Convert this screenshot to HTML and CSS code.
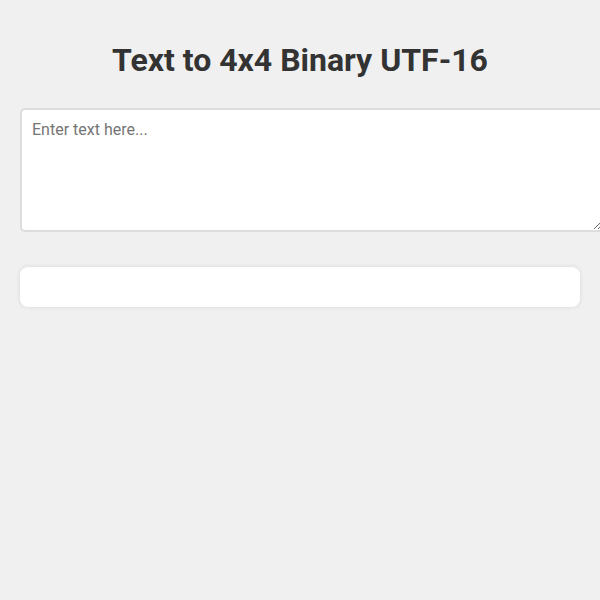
FILE: index.html
```html
<!DOCTYPE html>
<html>
<head>
<meta charset="utf-8">
<link rel="stylesheet" href="styles.css">
</head>
<body>
<div class="container">
  <h1 class="title">Text to 4x4 Binary UTF-16</h1>
  <textarea class="input" placeholder="Enter text here..."></textarea>
  <div class="output"></div>
</div>
</body>
</html>
```
FILE: styles.css
```css
html, body {
  margin: 0;
  background: #f0f0f0;
}
body {
  padding: 20px;
  font-family: Roboto, "Liberation Sans", sans-serif;
  color: #333;
}
.container {
  width: 560px;
}
.title {
  font-size: 32px;
  font-weight: 700;
  text-align: center;
  margin: 22px 0 28px;
  line-height: 1.172;
  color: #333;
}
.input {
  display: block;
  width: 100%;
  height: 100px;
  padding: 10px;
  border: 2px solid #ddd;
  border-radius: 5px;
  font-family: Roboto, "Liberation Sans", sans-serif;
  font-size: 16px;
  color: #333;
  background: #fff;
  margin: 0 0 35px;
  resize: both;
}
.input::placeholder {
  color: #757575;
}
.output {
  background: #fff;
  border-radius: 8px;
  padding: 20px;
  box-shadow: 0 0 5px rgba(0,0,0,0.1);
}
```
